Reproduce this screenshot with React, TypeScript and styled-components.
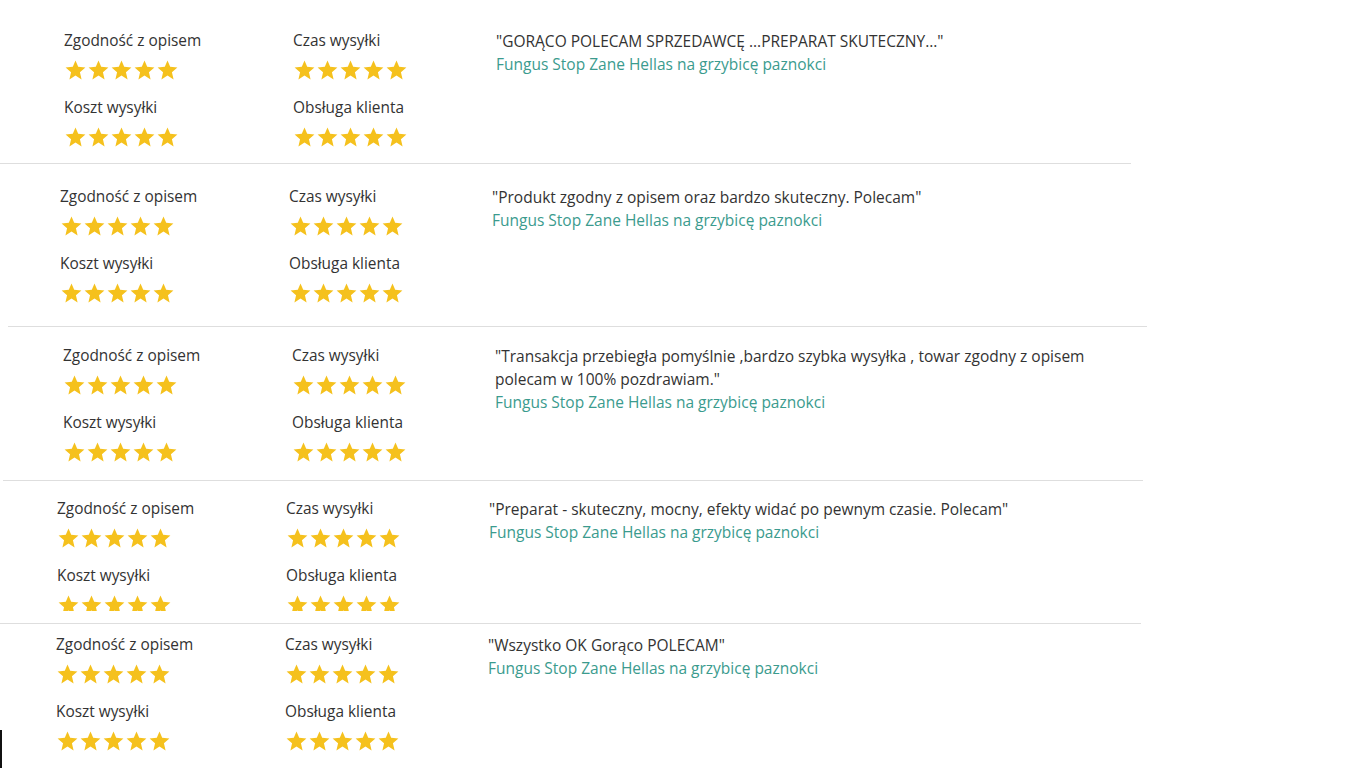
import React from "react";
import styled, { createGlobalStyle } from "styled-components";

const Global = createGlobalStyle`
  html, body { margin: 0; padding: 0; background: #ffffff; }
  body { font-family: "Open Sans", "Noto Sans", sans-serif; color: #333333; }
`;

const Page = styled.div`
  width: 1366px;
  height: 768px;
  overflow: hidden;
  background: #ffffff;
`;

const Slice = styled.section<{ $h: number }>`
  position: relative;
  height: ${(p) => p.$h}px;
  overflow: hidden;
`;

const Body = styled.div<{ $pl: number; $pt: number; $clip?: number }>`
  display: grid;
  grid-template-columns: 229px 203px 620px;
  align-items: start;
  padding-left: ${(p) => p.$pl}px;
  padding-top: ${(p) => p.$pt}px;
  ${(p) => (p.$clip ? `height: ${p.$clip}px; overflow: hidden; box-sizing: border-box;` : "")}
`;

const Ratings = styled.div`
  display: flex;
  flex-direction: column;
`;

const Label = styled.div`
  font-size: 15.4px;
  line-height: 24px;
  color: #333333;
  white-space: nowrap;
`;

const Stars = styled.div<{ $last?: boolean }>`
  display: flex;
  gap: 2px;
  height: 20px;
  margin-top: 7px;
  margin-bottom: ${(p) => (p.$last ? 0 : 16)}px;
  padding-left: 1px;
`;

const Review = styled.div`
  display: flex;
  flex-direction: column;
  max-width: 610px;
  padding-top: 1px;
`;

const Quote = styled.div`
  font-size: 15.5px;
  line-height: 23px;
  color: #333333;
`;

const Link = styled.a`
  font-size: 15.5px;
  line-height: 23px;
  color: #3b9b8e;
  text-decoration: none;
`;

const Divider = styled.div<{ $left: number; $width: number }>`
  position: absolute;
  bottom: 0;
  left: ${(p) => p.$left}px;
  width: ${(p) => p.$width}px;
  height: 1px;
  background: #dedede;
`;

const EdgeBar = styled.div`
  position: absolute;
  left: 0;
  bottom: 0;
  width: 2px;
  height: 38px;
  background: #111111;
`;

const Star = () => (
  <svg width="21" height="20" viewBox="0 0 24 23">
    <polygon
      points="12,0.6 15.1,7.9 23.4,8.6 17.1,14 19,22.3 12,17.9 5,22.3 6.9,14 0.6,8.6 8.9,7.9"
      fill="#f5c11d"
    />
  </svg>
);

const FiveStars = ({ last }: { last?: boolean }) => (
  <Stars $last={last}>
    <Star />
    <Star />
    <Star />
    <Star />
    <Star />
  </Stars>
);

type SliceData = {
  h: number;
  pl: number;
  pt: number;
  clip?: number;
  quote: string;
  divider?: { left: number; width: number };
  edge?: boolean;
};

const slices: SliceData[] = [
  {
    h: 164,
    pl: 64,
    pt: 29,
    quote: '"GORĄCO POLECAM SPRZEDAWCĘ ...PREPARAT SKUTECZNY..."',
    divider: { left: 0, width: 1131 },
  },
  {
    h: 163,
    pl: 60,
    pt: 21,
    quote: '"Produkt zgodny z opisem oraz bardzo skuteczny. Polecam"',
    divider: { left: 8, width: 1139 },
  },
  {
    h: 154,
    pl: 63,
    pt: 17,
    quote:
      '"Transakcja przebiegła pomyślnie ,bardzo szybka wysyłka , towar zgodny z opisem polecam w 100% pozdrawiam."',
    divider: { left: 3, width: 1140 },
  },
  {
    h: 143,
    pl: 57,
    pt: 16,
    clip: 130,
    quote: '"Preparat - skuteczny, mocny, efekty widać po pewnym czasie. Polecam"',
    divider: { left: 0, width: 1141 },
  },
  {
    h: 144,
    pl: 56,
    pt: 9,
    quote: '"Wszystko OK Gorąco POLECAM"',
    edge: true,
  },
];

export default function App() {
  return (
    <Page>
      <Global />
      {slices.map((s, i) => (
        <Slice key={i} $h={s.h}>
          <Body $pl={s.pl} $pt={s.pt} $clip={s.clip}>
            <Ratings>
              <Label>Zgodność z opisem</Label>
              <FiveStars />
              <Label>Koszt wysyłki</Label>
              <FiveStars last />
            </Ratings>
            <Ratings>
              <Label>Czas wysyłki</Label>
              <FiveStars />
              <Label>Obsługa klienta</Label>
              <FiveStars last />
            </Ratings>
            <Review>
              <Quote>{s.quote}</Quote>
              <Link href="#">Fungus Stop Zane Hellas na grzybicę paznokci</Link>
            </Review>
          </Body>
          {s.divider && <Divider $left={s.divider.left} $width={s.divider.width} />}
          {s.edge && <EdgeBar />}
        </Slice>
      ))}
    </Page>
  );
}
